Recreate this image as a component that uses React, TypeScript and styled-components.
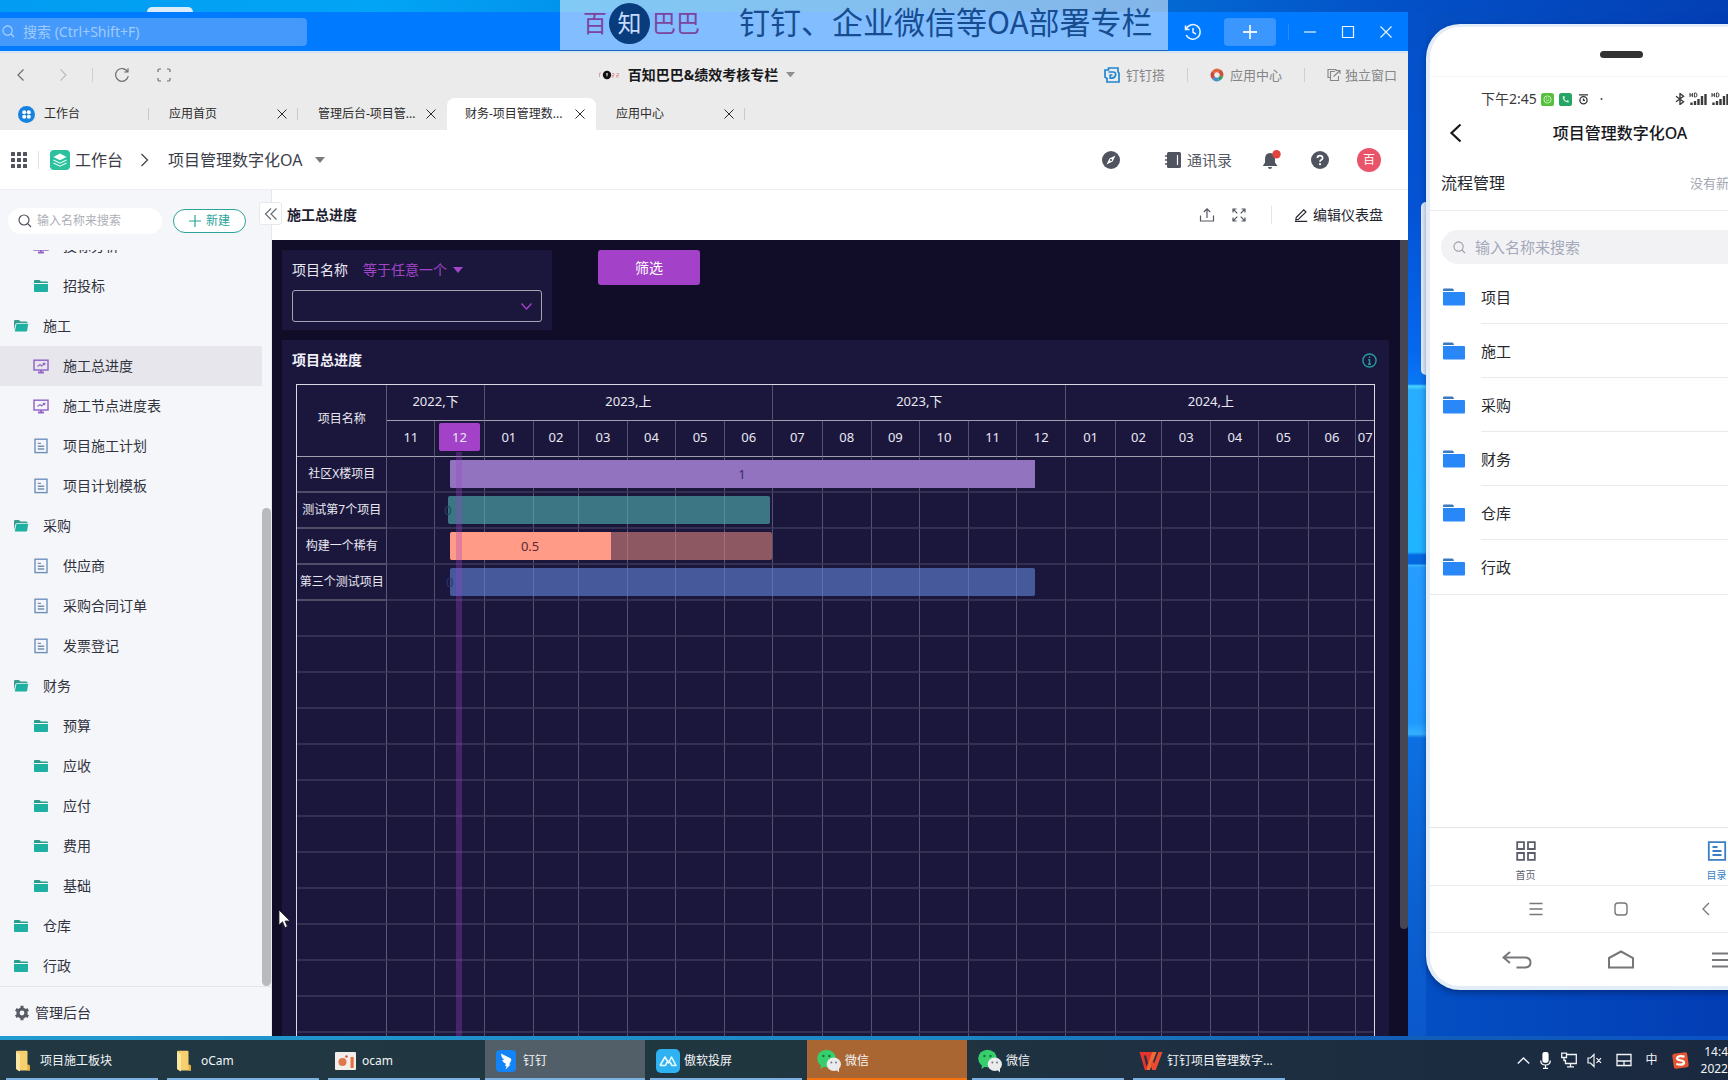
import React from "react";
import styled, { createGlobalStyle, css } from "styled-components";

/* ---------- base ---------- */

const Global = createGlobalStyle`
  *, *::before, *::after { box-sizing: border-box; }
  html, body { margin: 0; padding: 0; }
  body {
    font-family: "Noto Sans", "Noto Sans CJK SC", sans-serif;
    font-size: 14px;
    line-height: 20px;
    color: #1d2129;
    overflow: hidden;
  }
  button, input, select {
    font: inherit; color: inherit; background: none; border: 0; padding: 0; margin: 0;
    outline: none; letter-spacing: inherit;
  }
  a { color: inherit; text-decoration: none; }
  ul { list-style: none; margin: 0; padding: 0; }
  h1, h2, p { margin: 0; font-size: inherit; font-weight: inherit; }
  svg { display: block; flex: none; }
`;

const Desktop = styled.div`
  position: relative;
  display: flex;
  flex-direction: column;
  height: 100vh;
  overflow: hidden;
  background:
    linear-gradient(90deg, #229bd0 0, #1c86c4 55%, #1460b4 78%, #0a52c4 100%) 0 calc(100% - 40px) / 100% 4px no-repeat,
    linear-gradient(90deg, #029df2 0, #02a4f6 22%, #0290ea 35%, #0468d2 68%, #034fc6 82%, #033fb4 100%);
`;

const TopEdge = styled.div`
  display: flex;
  align-items: flex-end;
  flex: none;
  height: 12px;
  padding-left: 147px;
`;

const PeekHandle = styled.span`
  width: 46px;
  height: 5px;
  border-radius: 5px 5px 0 0;
  background: #dcebf8;
`;

const Stage = styled.div`
  display: grid;
  grid-template-columns: minmax(0, 1fr) 320px;
  flex: 1;
  min-height: 0;
  margin-bottom: 4px;
`;

const IconButton = styled.button<{ $w?: number }>`
  display: flex;
  align-items: center;
  justify-content: center;
  width: ${(p) => p.$w ?? 20}px;
  flex: none;
`;

const VLine = styled.span<{ $h?: number; $c?: string; $m?: number }>`
  flex: none;
  width: 1px;
  height: ${(p) => p.$h ?? 14}px;
  margin: 0 ${(p) => p.$m ?? 0}px;
  background: ${(p) => p.$c ?? "#d0d0d2"};
`;

/* ---------- banner ---------- */

const Banner = styled.div`
  position: absolute;
  top: 0;
  left: 560px;
  z-index: 5;
  display: flex;
  align-items: center;
  width: 608px;
  height: 51px;
  padding: 0 0 4px 23px;
  background: rgba(255, 255, 255, 0.51);
  border-bottom: 1px solid #1b62b8;
  white-space: nowrap;
`;

const BannerBrand = styled.span`
  display: flex;
  align-items: center;
  gap: 2px;
  width: 156px;
  font-size: 24px;
  line-height: 32px;
  color: #7b459f;
`;

const BannerDisc = styled.span`
  display: flex;
  align-items: center;
  justify-content: center;
  width: 41px;
  height: 41px;
  border-radius: 50%;
  background: #083c7c;
  color: #c4dcff;
`;

const BannerText = styled.span`
  padding-bottom: 4px;
  font-family: "Noto Sans CJK SC", sans-serif;
  font-size: 31px;
  line-height: 40px;
  color: #174d90;
`;

/* ---------- browser window ---------- */

const Window = styled.section`
  display: flex;
  flex-direction: column;
  min-width: 0;
  min-height: 0;
  background: #fff;
`;

const TitleBar = styled.header`
  display: flex;
  align-items: center;
  flex: none;
  height: 39px;
  padding-right: 3px;
  background: #007aff;
  color: #eaf3ff;
`;

const TitleSearch = styled.label`
  display: flex;
  align-items: center;
  gap: 8px;
  width: 307px;
  height: 28px;
  margin-right: auto;
  padding-left: 2px;
  border-radius: 0 4px 4px 0;
  background: #4499fb;
  color: #b4d8ff;
  input { flex: 1; min-width: 0; }
  input::placeholder { color: #a0cbfd; opacity: 1; }
`;

const PlusButton = styled.button`
  display: flex;
  align-items: center;
  justify-content: center;
  width: 52px;
  height: 28px;
  margin: 0 10px 0 21px;
  border-radius: 4px;
  background: #3b96fd;
`;

const Toolbar = styled.div`
  display: flex;
  align-items: center;
  flex: none;
  height: 47px;
  padding: 0 11px 2px 0;
  background: #ebebeb;
  border-top: 2px solid #d3e4f3;
  color: #6d6d6f;
`;

const ToolSide = styled.div<{ $end?: boolean }>`
  display: flex;
  align-items: center;
  flex: 1 1 0;
  gap: ${(p) => (p.$end ? 22 : 0)}px;
  justify-content: ${(p) => (p.$end ? "flex-end" : "flex-start")};
`;

const PageTitle = styled.button`
  display: flex;
  align-items: center;
  gap: 8px;
  padding-right: 4px;
  font-weight: 700;
  color: #19191b;
`;

const ToolLink = styled.a<{ $tight?: boolean }>`
  display: flex;
  align-items: center;
  gap: ${(p) => (p.$tight ? 4 : 6)}px;
  font-size: 13px;
  color: #858588;
  white-space: nowrap;
`;

const TabStrip = styled.div`
  display: flex;
  flex: none;
  height: 32px;
  background: #ebebeb;
  font-size: 12px;
`;

const Tab = styled.div<{ $active?: boolean; $line?: boolean }>`
  position: relative;
  display: flex;
  align-items: center;
  gap: 9px;
  width: 149px;
  padding: 0 10px 0 20px;
  color: #2b2b2d;
  white-space: nowrap;
  button:last-child { margin-left: auto; }
  &:first-child { padding-left: 18px; }
  ${(p) =>
    p.$active &&
    css`
      padding-left: 18px;
      background: #fff;
      border-radius: 8px 8px 0 0;
    `}
  ${(p) =>
    p.$line &&
    css`
      &::after {
        content: "";
        position: absolute;
        right: 0;
        top: 10px;
        height: 12px;
        border-right: 1px solid #cacacc;
      }
    `}
`;

/* ---------- app header ---------- */

const AppHeader = styled.div`
  display: flex;
  align-items: center;
  flex: none;
  height: 60px;
  padding: 0 27px 0 11px;
  border-bottom: 1px solid #f0f0f3;
  color: #565a66;
`;

const Crumb = styled.a<{ $gap: number }>`
  display: flex;
  align-items: center;
  gap: 5px;
  margin-left: ${(p) => p.$gap}px;
  font-size: 16px;
  line-height: 24px;
  color: #3b3e49;
  white-space: nowrap;
`;

const HeaderActions = styled.div`
  display: flex;
  align-items: center;
  margin-left: auto;
`;

const HeaderAction = styled.button<{ $gap: number }>`
  display: flex;
  align-items: center;
  gap: 6px;
  margin-left: ${(p) => p.$gap}px;
  font-size: 15px;
`;

const Avatar = styled.span`
  display: flex;
  align-items: center;
  justify-content: center;
  width: 24px;
  height: 24px;
  border-radius: 50%;
  background: #e9546a;
  color: #fff;
  font-size: 12px;
`;

/* ---------- sidebar ---------- */

const Body = styled.div`
  display: grid;
  grid-template-columns: 272px minmax(0, 1fr);
  flex: 1;
  min-height: 0;
`;

const Sidebar = styled.aside`
  position: relative;
  display: flex;
  flex-direction: column;
  min-height: 0;
  background: #f5f6fa;
  border-right: 1px solid #e6e7ec;
`;

const SideTools = styled.div`
  display: flex;
  align-items: center;
  flex: none;
  gap: 11px;
  height: 60px;
  padding: 2px 0 0 8px;
`;

const SideSearch = styled.label`
  display: flex;
  align-items: center;
  gap: 5px;
  width: 154px;
  height: 26px;
  padding-left: 10px;
  border-radius: 13px;
  background: #fff;
  font-size: 12px;
  color: #50535e;
  input { flex: 1; min-width: 0; }
  input::placeholder { color: #adafb7; opacity: 1; }
`;

const NewButton = styled.button`
  display: flex;
  align-items: center;
  justify-content: center;
  gap: 5px;
  width: 73px;
  height: 24px;
  border: 1px solid #2aa39a;
  border-radius: 12px;
  background: #fff;
  color: #2aa39a;
  font-size: 12px;
`;

const CollapseButton = styled.button`
  position: absolute;
  top: 12px;
  right: -11px;
  z-index: 2;
  display: flex;
  align-items: center;
  justify-content: center;
  width: 23px;
  height: 23px;
  border: 1px solid #e7e8ec;
  border-radius: 3px;
  background: #fff;
  color: #6a6d78;
`;

const TreeArea = styled.div`
  display: flex;
  flex: 1;
  min-height: 0;
`;

const Tree = styled.ul`
  display: flex;
  flex-direction: column;
  justify-content: flex-end;
  flex: 1;
  overflow: hidden;
`;

const TreeLink = styled.a<{ $depth: number; $active?: boolean }>`
  display: flex;
  align-items: center;
  gap: 14px;
  height: 40px;
  padding-left: ${(p) => (p.$depth ? 33 : 13)}px;
  background: ${(p) => (p.$active ? "#e6e6ec" : "transparent")};
  color: #30323d;
  white-space: nowrap;
`;

const SideScroll = styled.div`
  display: flex;
  flex-direction: column;
  justify-content: flex-end;
  width: 9px;
  &::after {
    content: "";
    height: 65%;
    border-radius: 5px;
    background: #b9babd;
  }
`;

const SideFooter = styled.a`
  display: flex;
  align-items: center;
  flex: none;
  gap: 5px;
  height: 50px;
  padding: 2px 0 0 14px;
  border-top: 1px solid #e4e5ea;
  color: #30323d;
`;

/* ---------- main ---------- */

const Main = styled.main`
  display: flex;
  flex-direction: column;
  min-width: 0;
  min-height: 0;
`;

const MainHeader = styled.div`
  display: flex;
  align-items: center;
  flex: none;
  height: 50px;
  padding: 0 25px 0 15px;
  color: #555863;
  h1 { margin-right: auto; font-weight: 700; color: #1d2030; }
`;

const EditButton = styled.button`
  display: flex;
  align-items: center;
  gap: 5px;
  padding-left: 6px;
  color: #23252f;
`;

const Dashboard = styled.div`
  display: flex;
  flex: 1;
  min-height: 0;
  background: #110c27;
`;

const DashContent = styled.div`
  display: flex;
  flex-direction: column;
  gap: 10px;
  flex: 1;
  min-width: 0;
  padding: 10px 11px 0 10px;
`;

const DashScroll = styled.div`
  width: 8px;
  &::after {
    content: "";
    display: block;
    height: 86.5%;
    border-radius: 0 0 4px 4px;
    background: #474653;
  }
`;

const FilterRow = styled.div`
  display: flex;
  align-items: flex-start;
  flex: none;
  gap: 46px;
`;

const FilterCard = styled.div`
  display: flex;
  flex-direction: column;
  gap: 10px;
  width: 270px;
  height: 80px;
  padding: 10px;
  background: #1b173c;
  color: #e9e8f2;
`;

const FilterHead = styled.div`
  display: flex;
  align-items: center;
  gap: 15px;
`;

const FilterMode = styled.button`
  display: flex;
  align-items: center;
  gap: 6px;
  color: #a244c9;
`;

const SelectBox = styled.div`
  position: relative;
  color: #a244c9;
  select {
    display: block;
    width: 100%;
    height: 32px;
    padding: 0 10px;
    appearance: none;
    border: 1px solid #a5a4b3;
    border-radius: 3px;
    color: #e9e8f2;
  }
  svg { position: absolute; right: 10px; top: 11px; }
`;

const FilterButton = styled.button`
  width: 102px;
  height: 35px;
  border-radius: 3px;
  background: #a341c9;
  color: #fff;
`;

const ChartCard = styled.section`
  flex: 1;
  min-height: 0;
  overflow: hidden;
  background: #1b173c;
  color: #e9e8f2;
`;

const ChartHead = styled.div`
  display: flex;
  align-items: center;
  justify-content: space-between;
  height: 44px;
  padding: 0 12px 4px 10px;
  color: #279a9c;
  h2 { font-weight: 700; color: #f1f0f8; }
`;

const GanttFrame = styled.div`
  position: relative;
  margin: 0 14px;
  border: 1px solid #d9d8e4;
`;

const GanttTable = styled.table`
  width: 100%;
  table-layout: fixed;
  border-collapse: separate;
  border-spacing: 0;
  font-size: 13px;
  white-space: nowrap;
  th, td {
    height: 36px;
    padding: 0;
    font-weight: 400;
    text-align: center;
    overflow: visible;
    border-right: 1px solid #55526d;
    border-bottom: 2px solid #343052;
  }
  thead th { border-bottom: 1px solid #a19faf; padding-bottom: 3px; }
  tr > :last-child { border-right: 0; }
  thead tr:first-child th:first-child,
  tbody th { font-size: 12px; border-right: 1px solid #5d5a74; }
  tbody th { border-bottom: 2px solid #504d69; }
  tbody tr:nth-child(n + 5) th { border-bottom-color: #343052; }
`;

const CurrentMonth = styled.span`
  display: block;
  height: 28px;
  margin: 0 4px;
  border-radius: 2px;
  background: #a341c9;
  line-height: 28px;
`;

const BarLayer = styled.div`
  position: absolute;
  top: 71px;
  left: 8.4%;
  right: 0;
  bottom: 0;
`;

const BarLane = styled.div`
  height: 36px;
  padding: 4px 0;
`;

const Bar = styled.div<{ $rest: string }>`
  height: 28px;
  border-radius: 2px;
  background: ${(p) => p.$rest};
`;

const BarFill = styled.div<{ $fill: string; $ink: string }>`
  display: flex;
  align-items: center;
  justify-content: center;
  height: 100%;
  border-radius: 2px 0 0 2px;
  background: ${(p) => p.$fill};
  color: ${(p) => p.$ink};
  font-size: 13px;
`;

const TodayLine = styled.div`
  position: absolute;
  top: -4px;
  bottom: 0;
  width: 6px;
  margin-left: -3px;
  background: rgba(162, 65, 201, 0.32);
`;

/* ---------- phone ---------- */

const PhoneColumn = styled.div`
  padding: 12px 0 0 13px;
  overflow: hidden;
  background:
    linear-gradient(
        180deg,
        #0450c8 0, #0453d4 200px, #0668ee 340px, #0a78f4 372px, #49d6ff 374px, #29adff 378px,
        #20b4ff 540px, #0468e0 543px, #0468e0 552px, #3ab4ff 553px, #269cff 556px, #1f98ff 710px,
        #34b0ff 722px, #0c70e2 726px, #0b60d0 900px, #0b58cc 100%
      ) 0 0 / 18px 100% no-repeat,
    linear-gradient(90deg, #0450c4 0, #033db4 100%);
`;

const PhoneWrap = styled.div`
  display: flex;
  align-items: flex-start;
`;

const SideKey = styled.span`
  flex: none;
  width: 5px;
  height: 173px;
  margin-top: 178px;
  border-radius: 5px 0 0 5px;
  background: #e6f0fb;
`;

const Phone = styled.section`
  display: flex;
  flex-direction: column;
  flex: none;
  width: 390px;
  height: calc(100vh - 114px);
  border: 4px solid #e3edf8;
  border-top-width: 3px;
  border-radius: 34px;
  background: #fff;
  box-shadow: 0 3px 6px rgba(0, 20, 80, 0.45);
  overflow: hidden;
`;

const Speaker = styled.div`
  display: flex;
  justify-content: center;
  flex: none;
  height: 50px;
  padding-top: 24px;
  border-bottom: 1px solid #f6f7f9;
  &::after {
    content: "";
    width: 43px;
    height: 7px;
    border-radius: 4px;
    background: #333;
  }
`;

const StatusBar = styled.div`
  display: flex;
  align-items: center;
  justify-content: space-between;
  flex: none;
  height: 42px;
  padding: 2px 82px 0 51px;
  color: #3b3b3d;
`;

const StatusGroup = styled.div<{ $gap: number }>`
  display: flex;
  align-items: center;
  gap: ${(p) => p.$gap}px;
  span { margin-right: 2px; }
`;

const PhoneTitle = styled.header`
  display: grid;
  grid-template-columns: 32px 1fr 32px;
  align-items: center;
  flex: none;
  height: 28px;
  padding: 0 12px 0 10px;
  text-align: center;
  font-size: 16px;
  line-height: 24px;
  font-weight: 500;
  color: #17181c;
`;

const FlowRow = styled.div`
  display: flex;
  align-items: center;
  justify-content: space-between;
  flex: none;
  height: 63px;
  margin-top: 1px;
  padding: 8px 12px 0 11px;
  border-bottom: 1px solid #ececef;
  font-size: 16px;
  color: #26282e;
  a { width: 110px; font-size: 13px; color: #a2a5b2; }
`;

const PhoneSearch = styled.label`
  display: flex;
  align-items: center;
  flex: none;
  gap: 9px;
  height: 34px;
  margin: 19px 12px 6px 11px;
  padding-left: 12px;
  border-radius: 17px;
  background: #f2f2f4;
  color: #9a9da8;
  font-size: 15px;
  input { flex: 1; min-width: 0; }
  input::placeholder { color: #a3a9ba; opacity: 1; }
`;

const PhoneItem = styled.a`
  display: grid;
  grid-template-columns: 38px 1fr;
  align-items: center;
  height: 54px;
  padding-left: 13px;
  font-size: 15px;
  color: #26282e;
  span { display: flex; align-items: center; height: 54px; border-bottom: 1px solid #e9e9ec; }
`;

const PhoneList = styled.ul`
  flex: none;
  border-bottom: 1px solid #e9e9ec;
  li:last-child span { border-bottom: 0; }
`;

const PhoneTabs = styled.nav`
  display: flex;
  flex: none;
  height: 58px;
  margin-top: auto;
  border-top: 1px solid #e6e6e9;
`;

const PhoneTab = styled.a<{ $active?: boolean }>`
  display: flex;
  flex-direction: column;
  align-items: center;
  gap: 7px;
  flex: 1;
  padding-top: 13px;
  font-size: 10px;
  line-height: 14px;
  color: ${(p) => (p.$active ? "#3a7fc6" : "#5c5f6a")};
`;

const KeyRow = styled.div<{ $h: number; $pad: number }>`
  display: flex;
  align-items: center;
  flex: none;
  height: ${(p) => p.$h}px;
  padding: 0 ${(p) => p.$pad}px;
  border-top: 1px solid #ececef;
  color: #77777a;
  button { display: flex; flex: 1; justify-content: center; }
`;

/* ---------- taskbar ---------- */

const Taskbar = styled.footer`
  display: flex;
  flex: none;
  gap: 1px;
  height: 40px;
  padding-left: 2px;
  background: linear-gradient(90deg, #213843 0, #20363f 45%, #1e3041 65%, #1a2940 100%);
  color: #f2f5f7;
  font-size: 12px;
`;

const Task = styled.button<{ $tone?: "active" | "alert" }>`
  position: relative;
  display: flex;
  align-items: center;
  gap: 4px;
  width: 160px;
  padding: 1px 0 0 10px;
  white-space: nowrap;
  background: ${(p) => (p.$tone === "active" ? "#535f68" : p.$tone === "alert" ? "#a96632" : "transparent")};
  &::after {
    content: "";
    position: absolute;
    bottom: 0;
    left: ${(p) => (p.$tone ? 0 : 4)}px;
    right: ${(p) => (p.$tone ? 0 : 4)}px;
    height: 2px;
    background: ${(p) => (p.$tone === "alert" ? "#f5720c" : "#7cb0e0")};
  }
  svg { width: 24px; }
`;

const Tray = styled.div`
  display: flex;
  align-items: center;
  gap: 14px;
  margin-left: auto;
`;

const TrayGroup = styled.div`
  display: flex;
  align-items: center;
  gap: 10px;
`;

const Clock = styled.time`
  display: block;
  margin-left: -2px;
  text-align: right;
  line-height: 17px;
`;

const Cursor = styled.svg`
  position: absolute;
  left: 278px;
  top: 909px;
  z-index: 4;
`;

/* ---------- icons ---------- */

type LineProps = { size?: number; box?: number; w?: number; d: string; fill?: string };
const Line = ({ size = 16, box = 16, w = 1, d, fill = "none" }: LineProps) => (
  <svg width={size} height={size} viewBox={`0 0 ${box} ${box}`} fill={fill} stroke="currentColor" strokeWidth={w} aria-hidden="true">
    <path d={d} />
  </svg>
);

const SearchGlyph = ({ size = 14 }: { size?: number }) => (
  <Line size={size} box={14} w={1.2} d="M6 1a5 5 0 1 0 0 10a5 5 0 1 0 0 -10M9.7 9.7L13 13" />
);
const Cross = ({ size = 12 }: { size?: number }) => <Line size={size} box={12} w={1} d="M1.5 1.5L10.5 10.5M10.5 1.5L1.5 10.5" />;
const Caret = ({ size = 10, c = "currentColor" }: { size?: number; c?: string }) => (
  <svg width={size} height={size * 0.6} viewBox="0 0 10 6" fill={c} aria-hidden="true">
    <path d="M0 0H10L5 6Z" />
  </svg>
);

const Folder = () => (
  <svg width="16" height="14" viewBox="0 0 16 14" aria-hidden="true">
    <path d="M1 4V2Q1 1 2 1H6.5L8 2.5H14Q15 2.5 15 3.5V4Z" fill="#2a9d8f" />
    <path d="M1 5H15V12Q15 13 14 13H2Q1 13 1 12Z" fill="#1fb0a4" />
  </svg>
);
const FolderOpen = () => (
  <svg width="16" height="14" viewBox="0 0 16 14" aria-hidden="true">
    <path d="M1 11V2Q1 1 2 1H6L7.5 2.5H13.5Q14.5 2.5 14.5 4H4L2.5 5Z" fill="#3c9c92" />
    <path d="M3.5 4.8H15.2L14.2 11.5Q14 12.5 13 12.5H1.8Z" fill="#1fb0a4" />
  </svg>
);
const Board = () => (
  <svg width="16" height="15" viewBox="0 0 16 15" fill="none" stroke="#9468c8" strokeWidth="1.5" aria-hidden="true">
    <rect x="1" y="1.2" width="14" height="9.8" />
    <path d="M4.5 7.5L7 5.5L8.7 7L11.5 4.6M9.8 4.4H11.8V6.2" strokeWidth="1.1" />
    <path d="M5 13.5H11M8 11V13" strokeWidth="2" />
  </svg>
);
const Doc = () => (
  <svg width="16" height="16" viewBox="0 0 16 16" fill="none" stroke="#6f90b8" strokeWidth="1.4" aria-hidden="true">
    <rect x="2" y="1.2" width="12" height="13.4" />
    <path d="M4.8 5.4H8M4.8 8.2H11.2M4.8 11H11.2" />
  </svg>
);
const PhoneFolder = () => (
  <svg width="22" height="18" viewBox="0 0 22 18" aria-hidden="true">
    <path d="M0 3V1.5Q0 .5 1 .5H9Q10 .5 10.5 1.6L11 3Z" fill="#3c78bd" />
    <path d="M0 4H21Q22 4 22 5V16.5Q22 17.5 21 17.5H1Q0 17.5 0 16.5Z" fill="#2a87f7" />
  </svg>
);
const Signal = () => (
  <svg width="19" height="14" viewBox="0 0 19 14" fill="none" stroke="#3b3b3d" aria-hidden="true">
    <path d="M1 1V5M1 3H3.4M3.4 1V5M5.4 1V5H6.4Q8 5 8 3T6.4 1H5.4" strokeWidth="1" />
    <path d="M2.5 10.5V13M6 9V13M9.5 7V13M13 4V13M16.5 2V13" strokeWidth="2.4" />
  </svg>
);
const WeChat = () => (
  <svg height="24" viewBox="0 0 24 24" aria-hidden="true">
    <ellipse cx="9.5" cy="9.5" rx="9.3" ry="8.8" fill="#36cf6c" />
    <path d="M4 16L3.5 20L8 17Z" fill="#36cf6c" />
    <circle cx="6.4" cy="7" r="1.2" fill="#19703a" />
    <circle cx="12.4" cy="7" r="1.2" fill="#19703a" />
    <ellipse cx="16.8" cy="15.2" rx="7.1" ry="6.7" fill="#e9ebec" />
    <path d="M19 20.5L22 23.4L22 18.5Z" fill="#e9ebec" />
    <circle cx="14.4" cy="13.6" r="1" fill="#777" />
    <circle cx="19" cy="13.6" r="1" fill="#777" />
  </svg>
);
const FileFolder = () => (
  <svg height="22" viewBox="0 0 24 22" aria-hidden="true">
    <path d="M4 1.5Q4 .8 5 .8H14.5Q15.5 .8 15.5 2V15L18 16V20.5H6L4 18.5Z" fill="#f6d06e" />
    <path d="M4 2L8 4V21.5L4 19Z" fill="#fbe6a4" />
    <path d="M15.5 14L18 15.5V20.5H15.5Z" fill="#e3ae3f" />
  </svg>
);

/* ---------- data ---------- */

type Kind = "folder" | "open" | "board" | "doc";
const tree: { label: string; kind: Kind; depth: number; active?: boolean }[] = [
  { label: "投标分析", kind: "board", depth: 1 },
  { label: "招投标", kind: "folder", depth: 1 },
  { label: "施工", kind: "open", depth: 0 },
  { label: "施工总进度", kind: "board", depth: 1, active: true },
  { label: "施工节点进度表", kind: "board", depth: 1 },
  { label: "项目施工计划", kind: "doc", depth: 1 },
  { label: "项目计划模板", kind: "doc", depth: 1 },
  { label: "采购", kind: "open", depth: 0 },
  { label: "供应商", kind: "doc", depth: 1 },
  { label: "采购合同订单", kind: "doc", depth: 1 },
  { label: "发票登记", kind: "doc", depth: 1 },
  { label: "财务", kind: "open", depth: 0 },
  { label: "预算", kind: "folder", depth: 1 },
  { label: "应收", kind: "folder", depth: 1 },
  { label: "应付", kind: "folder", depth: 1 },
  { label: "费用", kind: "folder", depth: 1 },
  { label: "基础", kind: "folder", depth: 1 },
  { label: "仓库", kind: "folder", depth: 0 },
  { label: "行政", kind: "folder", depth: 0 },
];
const kindIcon: Record<Kind, React.ReactNode> = { folder: <Folder />, open: <FolderOpen />, board: <Board />, doc: <Doc /> };

const halves = [
  { label: "2022,下", span: 2 },
  { label: "2023,上", span: 6 },
  { label: "2023,下", span: 6 },
  { label: "2024,上", span: 6 },
  { label: "", span: 1 },
];
const months: [string, number][] = [
  ["11", 30], ["12", 31],
  ["01", 31], ["02", 28], ["03", 31], ["04", 30], ["05", 31], ["06", 30],
  ["07", 31], ["08", 31], ["09", 30], ["10", 31], ["11", 30], ["12", 31],
  ["01", 31], ["02", 29], ["03", 31], ["04", 30], ["05", 31], ["06", 30],
  ["07", 11],
];
const totalDays = months.reduce((sum, [, days]) => sum + days, 0);
const nameShare = 8.4;
const pct = (days: number) => `${(days / totalDays) * 100}%`;

const projects = [
  { name: "社区X楼项目", from: 39, to: 406, done: 1, fill: "#9273bf", rest: "#9273bf", ink: "#3b2b72" },
  { name: "测试第7个项目", from: 38, to: 240, done: 0, fill: "transparent", rest: "rgba(83,182,182,.6)", ink: "#1f4558" },
  { name: "构建一个稀有", from: 39, to: 241, done: 0.5, fill: "#ff9b87", rest: "rgba(219,132,124,.6)", ink: "#5b2a35" },
  { name: "第三个测试项目", from: 39, to: 406, done: 0, fill: "transparent", rest: "rgba(99,134,219,.6)", ink: "#26356e" },
];
const rows = Array.from({ length: 17 }, (_, i) => projects[i]?.name ?? "");
const today = 45;

const phoneFolders = ["项目", "施工", "采购", "财务", "仓库", "行政"];

/* ---------- sections ---------- */

const BrowserChrome = () => (
  <>
    <TitleBar>
      <TitleSearch>
        <SearchGlyph size={13} />
        <input type="text" aria-label="搜索" placeholder="搜索 (Ctrl+Shift+F)" />
      </TitleSearch>
      <IconButton aria-label="历史记录">
        <Line size={18} box={18} w={1.5} d="M1.5 2.5V6.5H5.5M2 6.3A7.3 7.3 0 1 1 2.2 12M9 5V9.3L12 11" />
      </IconButton>
      <PlusButton aria-label="新建">
        <Line w={1.8} d="M8 1V15M1 8H15" />
      </PlusButton>
      <VLine $h={16} $c="#2a8dfb" $m={2} />
      <IconButton $w={38} aria-label="最小化"><Line size={14} box={14} w={1.2} d="M1 7H13" /></IconButton>
      <IconButton $w={38} aria-label="最大化"><Line size={14} box={14} w={1.2} d="M1.5 1.5H12.5V12.5H1.5Z" /></IconButton>
      <IconButton $w={38} aria-label="关闭"><Line size={14} box={14} w={1.2} d="M1.5 1.5L12.5 12.5M12.5 1.5L1.5 12.5" /></IconButton>
    </TitleBar>

    <Toolbar>
      <ToolSide>
        <IconButton $w={42} aria-label="后退"><Line size={14} box={14} w={1.2} d="M9.5 1.5L4 7L9.5 12.5" /></IconButton>
        <IconButton $w={42} aria-label="前进"><svg width="14" height="14" viewBox="0 0 14 14" fill="none" stroke="#bdbdbf" strokeWidth="1.2"><path d="M4.5 1.5L10 7L4.5 12.5" /></svg></IconButton>
        <VLine $m={8} />
        <IconButton $w={42} aria-label="刷新"><Line size={16} w={1.2} d="M13.6 4.8A6.4 6.4 0 1 0 14.3 9M14 1.3V5H10.2" /></IconButton>
        <IconButton $w={42} aria-label="全屏"><Line size={16} w={1.2} d="M5 2H3.2Q2 2 2 3.2V5M11 2H12.8Q14 2 14 3.2V5M2 11V12.8Q2 14 3.2 14H5M14 11V12.8Q14 14 12.8 14H11" /></IconButton>
      </ToolSide>
      <PageTitle>
        <svg width="22" height="10" viewBox="0 0 22 10" aria-hidden="true">
          <circle cx="9" cy="5" r="4.2" fill="#111" />
          <path d="M8 3.8H10M9 3.8V6.4" stroke="#fff" strokeWidth=".8" />
          <path d="M3 3H1.5V7M14 3.5H16V5.5H14V7H16M18.5 3.5H20.5V5.5H18.5V7H20.5" stroke="#e08a90" strokeWidth=".8" fill="none" />
        </svg>
        <span>百知巴巴&amp;绩效考核专栏</span>
        <Caret size={9} c="#8e8e92" />
      </PageTitle>
      <ToolSide $end>
        <ToolLink href="#dingdingda">
          <svg width="16" height="16" viewBox="0 0 16 16" fill="none" stroke="#2186d0" strokeWidth="1.7" aria-hidden="true">
            <path d="M4.5 1H14V5L15 6V15H3V11.5L1 10V3H4.5Z" />
            <path d="M4.5 5H9.5Q12 5.3 11.6 8Q11 11 8 11.2H6.2V8H8.5" />
          </svg>
          钉钉搭
        </ToolLink>
        <VLine />
        <ToolLink href="#center">
          <svg width="14" height="14" viewBox="0 0 14 14" fill="none" strokeWidth="3.6" aria-hidden="true">
            <path d="M3.3 4.3A4.6 4.6 0 0 1 9 2.9" stroke="#e0683c" />
            <path d="M9 2.9A4.6 4.6 0 0 1 11.4 8.2" stroke="#cf4f3c" />
            <path d="M11.4 8.2A4.6 4.6 0 0 1 8.5 11.3" stroke="#3c9b57" />
            <path d="M8.5 11.3A4.6 4.6 0 0 1 3.6 10" stroke="#3e8fd6" />
            <path d="M3.6 10A4.6 4.6 0 0 1 3.3 4.3" stroke="#c9483c" />
          </svg>
          应用中心
        </ToolLink>
        <VLine />
        <ToolLink href="#standalone" $tight>
          <Line size={14} box={14} w={1.1} d="M8 3.5H3.5V12.5H11.5V8M3.5 9.5H1V1.5H9V3M6.5 8.5L12.5 3M9.5 2.5H13V6" />
          独立窗口
        </ToolLink>
      </ToolSide>
    </Toolbar>

    <TabStrip>
      <Tab $line>
        <svg width="17" height="17" viewBox="0 0 17 17" aria-hidden="true">
          <circle cx="8.5" cy="8.5" r="8.5" fill="#1683e0" />
          <g fill="#fff">
            <circle cx="6.2" cy="6.2" r="2" /><circle cx="10.8" cy="6.2" r="2" />
            <circle cx="6.2" cy="10.8" r="2" /><circle cx="10.8" cy="10.8" r="2" />
          </g>
        </svg>
        工作台
      </Tab>
      <Tab $line>应用首页<IconButton $w={12} aria-label="关闭标签"><Cross /></IconButton></Tab>
      <Tab>管理后台-项目管...<IconButton $w={12} aria-label="关闭标签"><Cross /></IconButton></Tab>
      <Tab $active>财务-项目管理数...<IconButton $w={12} aria-label="关闭标签"><Cross /></IconButton></Tab>
      <Tab $line>应用中心<IconButton $w={12} aria-label="关闭标签"><Cross /></IconButton></Tab>
    </TabStrip>
  </>
);

const AppBar = () => (
  <AppHeader>
    <IconButton $w={16} aria-label="应用列表">
      <svg width="16" height="16" viewBox="0 0 16 16" fill="#50535d" aria-hidden="true">
        {[0, 6, 12].map((y) => [0, 6, 12].map((x) => <rect key={`${x}-${y}`} x={x} y={y} width="4" height="4" rx=".6" />))}
      </svg>
    </IconButton>
    <VLine $h={18} $c="#e3e3e7" $m={11} />
    <Crumb href="#workbench" $gap={0}>
      <svg width="20" height="20" viewBox="0 0 20 20" aria-hidden="true">
        <rect width="20" height="20" rx="4" fill="#2bc19c" />
        <path d="M10 3.6L16.5 6.9L10 10.2L3.5 6.9Z" fill="#fff" />
        <path d="M3.5 10L10 13.2L16.5 10M3.5 13L10 16.2L16.5 13" fill="none" stroke="#e6fff8" strokeWidth="1.2" />
      </svg>
      工作台
    </Crumb>
    <Crumb href="#project" $gap={14}>
      <Line size={14} box={14} w={1.2} d="M4.5 1L10.5 7L4.5 13" />
    </Crumb>
    <Crumb href="#project" $gap={17}>项目管理数字化OA</Crumb>
    <HeaderAction $gap={13} aria-label="切换应用"><Caret size={10} c="#7b7d86" /></HeaderAction>

    <HeaderActions>
      <HeaderAction $gap={0} aria-label="发现">
        <svg width="18" height="18" viewBox="0 0 18 18" aria-hidden="true">
          <circle cx="9" cy="9" r="9" fill="#50545f" />
          <path d="M13.5 4.5L10.6 10.6L4.5 13.5L7.4 7.4Z" fill="#fff" />
          <circle cx="9" cy="9" r="1.1" fill="#50545f" />
        </svg>
      </HeaderAction>
      <HeaderAction $gap={45}>
        <svg width="16" height="16" viewBox="0 0 16 16" aria-hidden="true">
          <rect x="2" width="14" height="16" rx="1.6" fill="#50545f" />
          <path d="M0 4H4M0 8H4M0 12H4" stroke="#50545f" strokeWidth="1.4" />
          <path d="M12.5 3V13" stroke="#fff" strokeWidth="1.2" />
        </svg>
        通讯录
      </HeaderAction>
      <HeaderAction $gap={30} aria-label="通知">
        <svg width="20" height="20" viewBox="0 0 20 20" aria-hidden="true">
          <path d="M8 3Q13 3 13 9V12.5L15.5 16H.8L3 12.5V9Q3 3 8 3ZM6 17H10Q10 19 8 19T6 17Z" fill="#50545f" />
          <circle cx="14.5" cy="4.3" r="4.2" fill="#e0443f" />
        </svg>
      </HeaderAction>
      <HeaderAction $gap={29} aria-label="帮助">
        <svg width="18" height="18" viewBox="0 0 18 18" aria-hidden="true">
          <circle cx="9" cy="9" r="9" fill="#50545f" />
          <path d="M6.4 7Q6.5 4.6 9 4.6T11.6 6.9Q11.6 8.2 10.2 8.9Q9 9.5 9 10.8" fill="none" stroke="#fff" strokeWidth="1.7" />
          <circle cx="9" cy="13.2" r="1.1" fill="#fff" />
        </svg>
      </HeaderAction>
      <HeaderAction $gap={28}><Avatar>百</Avatar></HeaderAction>
    </HeaderActions>
  </AppHeader>
);

const SideNav = () => (
  <Sidebar>
    <SideTools>
      <SideSearch>
        <SearchGlyph />
        <input type="text" aria-label="输入名称来搜索" placeholder="输入名称来搜索" />
      </SideSearch>
      <NewButton><Line size={12} box={12} w={1.2} d="M6 0V12M0 6H12" />新建</NewButton>
    </SideTools>
    <CollapseButton aria-label="收起侧栏">
      <Line size={14} box={14} w={1.2} d="M7 1.5L1.5 7L7 12.5M12.5 1.5L7 7L12.5 12.5" />
    </CollapseButton>
    <TreeArea>
      <Tree>
        {tree.map((n) => (
          <li key={n.label}>
            <TreeLink href={`#${n.label}`} $depth={n.depth} $active={n.active}>
              {kindIcon[n.kind]}
              {n.label}
            </TreeLink>
          </li>
        ))}
      </Tree>
      <SideScroll />
    </TreeArea>
    <SideFooter href="#admin">
      <svg width="16" height="16" viewBox="0 0 16 16" aria-hidden="true">
        <circle cx="8" cy="8" r="4" fill="none" stroke="#585b66" strokeWidth="3.2" />
        <path d="M8 .8V3.5M8 12.5V15.2M1.8 4.4L4 5.7M12 10.3L14.2 11.6M1.8 11.6L4 10.3M12 5.7L14.2 4.4" stroke="#585b66" strokeWidth="3" />
      </svg>
      管理后台
    </SideFooter>
  </Sidebar>
);

const Gantt = () => (
  <GanttFrame>
    <GanttTable>
      <colgroup>
        <col style={{ width: `${nameShare}%` }} />
        {months.map(([, days], i) => (
          <col key={i} style={{ width: `${((100 - nameShare) * days) / totalDays}%` }} />
        ))}
      </colgroup>
      <thead>
        <tr>
          <th rowSpan={2} scope="col">项目名称</th>
          {halves.map((h, i) => <th key={i} colSpan={h.span} scope="colgroup">{h.label}</th>)}
        </tr>
        <tr>
          {months.map(([label], i) => (
            <th key={i} scope="col">{i === 1 ? <CurrentMonth>{label}</CurrentMonth> : label}</th>
          ))}
        </tr>
      </thead>
      <tbody>
        {rows.map((name, r) => (
          <tr key={r}>
            <th scope="row">{name}</th>
            {months.map((_, i) => <td key={i} />)}
          </tr>
        ))}
      </tbody>
    </GanttTable>
    <BarLayer>
      {projects.map((p) => (
        <BarLane key={p.name}>
          <Bar $rest={p.rest} style={{ marginLeft: pct(p.from), width: pct(p.to - p.from) }}>
            <BarFill $fill={p.fill} $ink={p.ink} style={{ width: `${p.done * 100}%` }}>{p.done}</BarFill>
          </Bar>
        </BarLane>
      ))}
      <TodayLine style={{ left: pct(today) }} />
    </BarLayer>
  </GanttFrame>
);

const DashboardPage = () => (
  <Main>
    <MainHeader>
      <h1>施工总进度</h1>
      <IconButton $w={32} aria-label="导出"><Line size={16} w={1.2} d="M8 11V2M4.8 5L8 1.8L11.2 5M1.5 8.5V14H14.5V8.5" /></IconButton>
      <IconButton $w={32} aria-label="全屏"><Line size={16} w={1.2} d="M2 5.5V2H5.5M2 2L6.3 6.3M10.5 2H14V5.5M14 2L9.7 6.3M2 10.5V14H5.5M2 14L6.3 9.7M14 10.5V14H10.5M14 14L9.7 9.7" /></IconButton>
      <VLine $h={18} $c="#e6e6ea" $m={16} />
      <EditButton>
        <Line size={14} box={14} w={1.1} d="M2.2 9.5L9.8 1.8L12 4L4.5 11.2L1.8 11.7ZM1 13.4H13.2" />
        编辑仪表盘
      </EditButton>
    </MainHeader>
    <Dashboard>
      <DashContent>
        <FilterRow>
          <FilterCard>
            <FilterHead>
              <label htmlFor="project">项目名称</label>
              <FilterMode>等于任意一个<Caret size={10} /></FilterMode>
            </FilterHead>
            <SelectBox>
              <select id="project" defaultValue=""><option value="" /></select>
              <Line size={11} box={11} w={1.4} d="M0.5 2.5L5.5 8L10.5 2.5" />
            </SelectBox>
          </FilterCard>
          <FilterButton>筛选</FilterButton>
        </FilterRow>
        <ChartCard>
          <ChartHead>
            <h2>项目总进度</h2>
            <Line size={15} w={1.5} d="M8 1A7 7 0 1 0 8 15A7 7 0 1 0 8 1M8 3.8V5.4M6.6 7.2H8V12M6.4 12H9.6" />
          </ChartHead>
          <Gantt />
        </ChartCard>
      </DashContent>
      <DashScroll />
    </Dashboard>
  </Main>
);

const PhoneMirror = () => (
  <PhoneColumn>
    <PhoneWrap>
      <SideKey />
      <Phone>
        <Speaker />
        <StatusBar>
          <StatusGroup $gap={2}>
            <span>下午2:45</span>
            <svg width="13" height="13" viewBox="0 0 13 13" aria-hidden="true">
              <rect width="13" height="13" rx="2.6" fill="#56bf3d" />
              <circle cx="6.5" cy="6.5" r="3.6" fill="none" stroke="#c6f0bb" />
              <path d="M4.8 6.5Q6.5 9 8.2 6.5M5 5H5.8M7.4 5H8.2" fill="none" stroke="#c6f0bb" />
            </svg>
            <svg width="16" height="13" viewBox="-3 0 16 13" aria-hidden="true">
              <rect width="13" height="13" rx="2.6" fill="#27a567" />
              <path d="M3.6 3.4Q3.8 8.8 9.6 9.6L9.8 7.8L8.2 7.2L7.4 8Q5.6 7 5.2 5.4L6 4.6L5.2 3Z" fill="#d7f5e4" />
            </svg>
            <svg width="15" height="11" viewBox="-8 0 15 11" fill="none" stroke="#333" strokeWidth="1.3" aria-hidden="true">
              <path d="M-3 .8H6M1.5 2.6A3.6 3.6 0 1 0 1.5 9.8A3.6 3.6 0 1 0 1.5 2.6M1.5 4.5V6.4H3" />
            </svg>
            <svg width="14" height="4" viewBox="0 0 14 4" aria-hidden="true"><circle cx="10.5" cy="2" r="1" fill="#444" /></svg>
          </StatusGroup>
          <StatusGroup $gap={3}>
            <Line size={12} box={12} w={1.4} d="M2 3.3L9.5 8.7L6 11.5V.5L9.5 3.3L2 8.7" />
            <Signal />
            <Signal />
          </StatusGroup>
        </StatusBar>
        <PhoneTitle>
          <IconButton $w={32} aria-label="返回"><Line size={20} box={20} w={2.2} d="M14.5 1.5L5.5 10L14.5 18.5" /></IconButton>
          <span>项目管理数字化OA</span>
        </PhoneTitle>
        <FlowRow><span>流程管理</span><a href="#flow">没有新</a></FlowRow>
        <PhoneSearch>
          <SearchGlyph size={13} />
          <input type="text" aria-label="搜索目录" placeholder="输入名称来搜索" />
        </PhoneSearch>
        <PhoneList>
          {phoneFolders.map((f) => (
            <li key={f}><PhoneItem href={`#m-${f}`}><PhoneFolder /><span>{f}</span></PhoneItem></li>
          ))}
        </PhoneList>
        <PhoneTabs>
          <PhoneTab href="#home">
            <Line size={20} box={20} w={1.8} d="M1.2 1.2H8V8H1.2ZM12 1.2H18.8V8H12ZM1.2 12H8V18.8H1.2ZM12 12H18.8V18.8H12Z" />
            首页
          </PhoneTab>
          <PhoneTab href="#catalog" $active>
            <Line size={20} box={20} w={1.8} d="M1.8 1.2H18.2V18.8H1.8ZM5.5 6H10.5M5.5 10H14.5M5.5 14H14.5" />
            目录
          </PhoneTab>
        </PhoneTabs>
        <KeyRow $h={47} $pad={64}>
          <button aria-label="菜单"><Line size={14} box={14} w={1.3} d="M.5 1.5H13.5M.5 7H13.5M.5 12.5H13.5" /></button>
          <button aria-label="主屏幕"><Line size={14} box={14} w={1.4} d="M4 1H10Q13 1 13 4V10Q13 13 10 13H4Q1 13 1 10V4Q1 1 4 1Z" /></button>
          <button aria-label="返回键"><Line size={14} box={14} w={1.3} d="M10 1L4 7L10 13" /></button>
        </KeyRow>
        <KeyRow $h={54} $pad={35}>
          <button aria-label="后退">
            <svg width="30" height="18" viewBox="0 0 30 18" fill="none" stroke="currentColor" strokeWidth="2" aria-hidden="true"><path d="M8 1L1.5 6.5L8 12M2 6.5H23.5Q28.5 7 28.5 11.5T23.5 16.5H14.5" /></svg>
          </button>
          <button aria-label="首页键">
            <svg width="26" height="19" viewBox="0 0 26 19" fill="none" stroke="currentColor" strokeWidth="2" aria-hidden="true"><path d="M1 8L13 1.5L25 8V17.5H1Z" /></svg>
          </button>
          <button aria-label="最近任务">
            <svg width="26" height="16" viewBox="0 0 26 16" fill="none" stroke="currentColor" strokeWidth="2" aria-hidden="true"><path d="M0 1.5H26M0 8H26M0 14.5H26" /></svg>
          </button>
        </KeyRow>
      </Phone>
    </PhoneWrap>
  </PhoneColumn>
);

const SystemBar = () => (
  <Taskbar>
    <Task><FileFolder />项目施工板块</Task>
    <Task><FileFolder />oCam</Task>
    <Task>
      <svg height="20" viewBox="0 0 24 20" aria-hidden="true">
        <rect x="1" y="1" width="21" height="18" rx="1" fill="#f4eeea" />
        <circle cx="8.5" cy="11" r="4" fill="#e0764c" />
        <circle cx="12.5" cy="5.5" r="1.2" fill="#d44a3a" />
        <rect x="16.5" y="6" width="3.2" height="11" fill="#df7443" />
      </svg>
      ocam
    </Task>
    <Task $tone="active">
      <svg height="22" viewBox="0 0 24 22" aria-hidden="true">
        <rect x="1" width="20" height="22" rx="4" fill="#1384f5" />
        <path d="M6 3.5L15.5 8.2Q17 9.5 15.5 12L14 14.5H15.6L10.6 19.5L11.6 16H10L11 13.8Q7.5 12.5 7.2 9.8L9.5 10Q6.2 7.5 6 3.5Z" fill="#fff" />
      </svg>
      钉钉
    </Task>
    <Task>
      <svg height="24" viewBox="0 0 24 24" aria-hidden="true">
        <rect width="24" height="24" rx="5" fill="#2fb2f2" />
        <path d="M4 16.5L9 8L12.5 14L15.5 8L20 16.5H16L14 13M4 16.5H9.5L12 11" fill="none" stroke="#e9faff" strokeWidth="1.6" strokeLinejoin="round" />
      </svg>
      傲软投屏
    </Task>
    <Task $tone="alert"><WeChat />微信</Task>
    <Task><WeChat />微信</Task>
    <Task>
      <svg height="20" viewBox="0 0 24 20" aria-hidden="true">
        <path d="M.5 1H17.5L16 4.5H14.8L9.5 19H5.8Z" fill="#e5332e" />
        <path d="M4.8 4.5H7L9 12L7.5 15.5Z" fill="#20343f" />
        <path d="M12 4.5L13.5 1H17.5L10.8 19H7.5Z" fill="#f06a35" />
        <path d="M23.5 1H19.5L15 12.5L13.5 8.5L11.5 13.5L13.2 19H16.8Z" fill="#ec4a2e" />
      </svg>
      钉钉项目管理数字...
    </Task>
    <Tray>
      <TrayGroup>
        <IconButton $w={13} aria-label="显示隐藏的图标"><Line size={13} box={13} w={1.4} d="M.8 9.5L6.5 4L12.2 9.5" /></IconButton>
        <svg width="11" height="17" viewBox="0 0 11 17" fill="none" stroke="#fff" strokeWidth="1.2" aria-hidden="true">
          <rect x="3" y=".6" width="5" height="9.6" rx="1.5" fill="#fff" />
          <path d="M.7 8.5Q.7 13 5.5 13T10.3 8.5M5.5 13V16M3 16.3H8" />
        </svg>
        <Line size={16} w={1.3} d="M5 2.5H15.3V11.5H4.5V8M9.5 11.5V14.5M6 14.8H13M.7 1.2H5.5V5.5H.7ZM3 5.5V8.5H5" />
        <Line size={15} box={15} w={1.2} d="M1 5H3.5L7 1.5V13.5L3.5 10H1ZM9.5 5.2L14 9.8M14 5.2L9.5 9.8" />
      </TrayGroup>
      <Line size={16} w={1.3} d="M1 2.5H15V13.5H1ZM1 9H15M8 9V13.5" />
      <span>中</span>
      <svg width="17" height="17" viewBox="0 0 17 17" aria-hidden="true">
        <rect x="1" y="1" width="15" height="15" rx="2" fill="#e2552e" transform="rotate(-8 8.5 8.5)" />
        <path d="M12.5 4.6Q5.5 3.2 5 6.1Q5 8 8.5 8.4Q12.3 8.8 12 11Q11 13.6 4.3 12" fill="none" stroke="#fff" strokeWidth="2.3" />
      </svg>
      <Clock>14:4<br />2022</Clock>
    </Tray>
  </Taskbar>
);

export default function App() {
  return (
    <>
      <Global />
      <Desktop>
        <TopEdge><PeekHandle /></TopEdge>
        <Stage>
          <Window>
            <BrowserChrome />
            <AppBar />
            <Body>
              <SideNav />
              <DashboardPage />
            </Body>
          </Window>
          <PhoneMirror />
        </Stage>
        <SystemBar />
        <Banner>
          <BannerBrand>百<BannerDisc>知</BannerDisc>巴巴</BannerBrand>
          <BannerText>钉钉、企业微信等OA部署专栏</BannerText>
        </Banner>
        <Cursor width="13" height="20" viewBox="0 0 13 20" aria-hidden="true">
          <path d="M1 1V16L4.5 12.8L7 18.6L9.4 17.5L7 12H12Z" fill="#fff" stroke="#222" strokeWidth=".8" />
        </Cursor>
      </Desktop>
    </>
  );
}
